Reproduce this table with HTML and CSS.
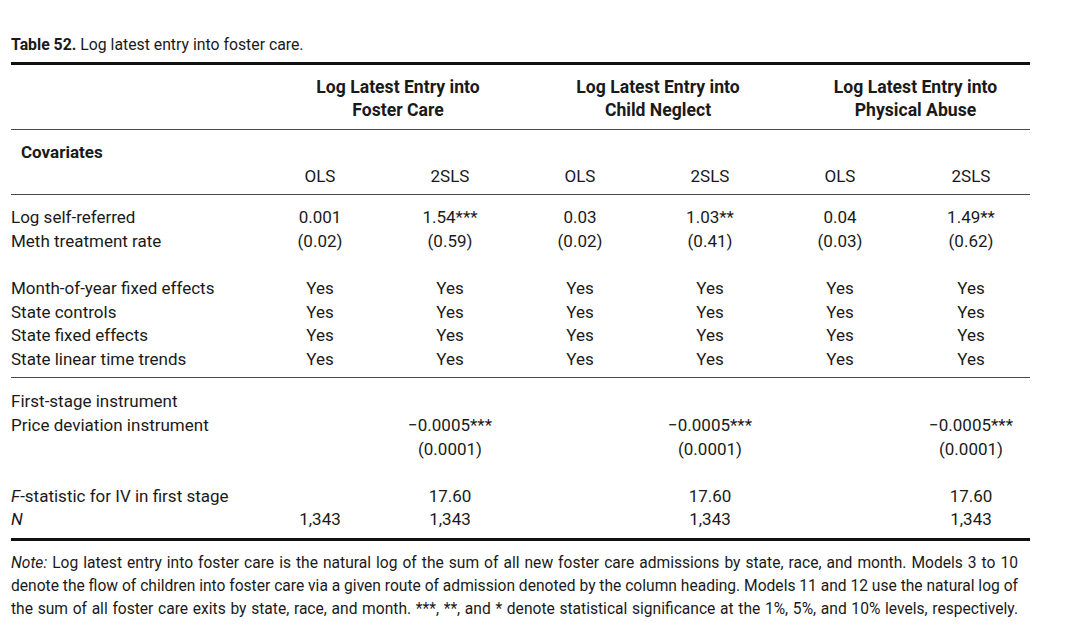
FILE: index.html
```html
<!DOCTYPE html>
<html lang="en">
<head>
<meta charset="utf-8">
<title>Table 52</title>
<link rel="stylesheet" href="styles.css">
</head>
<body>
<div class="page">
  <p class="caption"><b>Table 52.</b> Log latest entry into foster care.</p>
  <table class="tbl">
    <colgroup>
      <col class="c-label">
      <col class="c-num"><col class="c-num"><col class="c-num"><col class="c-num"><col class="c-num"><col class="c-last">
    </colgroup>
    <thead>
      <tr class="grp first last">
        <th></th>
        <th colspan="2" class="gh">Log Latest Entry into<br>Foster Care</th>
        <th colspan="2" class="gh">Log Latest Entry into<br>Child Neglect</th>
        <th colspan="2" class="gh">Log Latest Entry into<br>Physical Abuse</th>
      </tr>
      <tr class="first">
        <th class="lbl cov">Covariates</th>
        <td></td><td></td><td></td><td></td><td></td><td></td>
      </tr>
      <tr class="last">
        <td></td>
        <td>OLS</td><td>2SLS</td><td>OLS</td><td>2SLS</td><td>OLS</td><td>2SLS</td>
      </tr>
    </thead>
    <tbody>
      <tr class="first">
        <td class="lbl">Log self-referred</td>
        <td>0.001</td><td>1.54***</td><td>0.03</td><td>1.03**</td><td>0.04</td><td>1.49**</td>
      </tr>
      <tr>
        <td class="lbl">Meth treatment rate</td>
        <td>(0.02)</td><td>(0.59)</td><td>(0.02)</td><td>(0.41)</td><td>(0.03)</td><td>(0.62)</td>
      </tr>
      <tr class="blank"><td colspan="7"></td></tr>
      <tr>
        <td class="lbl">Month-of-year fixed effects</td>
        <td>Yes</td><td>Yes</td><td>Yes</td><td>Yes</td><td>Yes</td><td>Yes</td>
      </tr>
      <tr>
        <td class="lbl">State controls</td>
        <td>Yes</td><td>Yes</td><td>Yes</td><td>Yes</td><td>Yes</td><td>Yes</td>
      </tr>
      <tr>
        <td class="lbl">State fixed effects</td>
        <td>Yes</td><td>Yes</td><td>Yes</td><td>Yes</td><td>Yes</td><td>Yes</td>
      </tr>
      <tr class="last">
        <td class="lbl">State linear time trends</td>
        <td>Yes</td><td>Yes</td><td>Yes</td><td>Yes</td><td>Yes</td><td>Yes</td>
      </tr>
    </tbody>
    <tbody class="second">
      <tr class="first">
        <td class="lbl">First-stage instrument</td>
        <td></td><td></td><td></td><td></td><td></td><td></td>
      </tr>
      <tr>
        <td class="lbl">Price deviation instrument</td>
        <td></td><td>−0.0005***</td><td></td><td>−0.0005***</td><td></td><td>−0.0005***</td>
      </tr>
      <tr>
        <td class="lbl"></td>
        <td></td><td>(0.0001)</td><td></td><td>(0.0001)</td><td></td><td>(0.0001)</td>
      </tr>
      <tr class="blank"><td colspan="7"></td></tr>
      <tr>
        <td class="lbl"><i>F</i>-statistic for IV in first stage</td>
        <td></td><td>17.60</td><td></td><td>17.60</td><td></td><td>17.60</td>
      </tr>
      <tr class="last">
        <td class="lbl"><i>N</i></td>
        <td>1,343</td><td>1,343</td><td></td><td>1,343</td><td></td><td>1,343</td>
      </tr>
    </tbody>
  </table>
  <p class="note"><i>Note:</i> Log latest entry into foster care is the natural log of the sum of all new foster care admissions by state, race, and month. Models 3 to 10<br>denote the flow of children into foster care via a given route of admission denoted by the column heading. Models 11 and 12 use the natural log of<br>the sum of all foster care exits by state, race, and month. ***, **, and * denote statistical significance at the 1%, 5%, and 10% levels, respectively.</p>
</div>
</body>
</html>
```

FILE: styles.css
```css
html, body {
  margin: 0;
  padding: 0;
  background: #ffffff;
}
body {
  font-family: Roboto, "Noto Sans", "Liberation Sans", sans-serif;
  color: #1a1a1a;
}
.page {
  padding: 36px 0 0 11px;
  width: 1019px;
}
.caption {
  margin: 0;
  font-size: 15.8px;
  line-height: 18px;
}
.caption b {
  font-weight: 700;
}
.tbl {
  margin-top: 8px;
  width: 1019px;
  border-collapse: collapse;
  table-layout: fixed;
  border-top: 3px solid #111;
  border-bottom: 3px solid #111;
  font-size: 17px;
}
.c-label { width: 244px; }
.c-num { width: 130px; }
.c-last { width: 125px; }
.tbl th, .tbl td {
  padding: 0;
  height: 23.6px;
  line-height: 23.6px;
  text-align: center;
  font-weight: 400;
  white-space: nowrap;
}
.tbl td:last-child, .tbl th:last-child {
  padding-left: 7px;
}
.tbl .lbl {
  text-align: left;
}
.tbl .cov {
  font-weight: 700;
  padding-left: 10px;
}
.tbl .gh {
  font-weight: 700;
  font-size: 17.6px;
  padding-left: 26px;
  line-height: 23px;
}
.tbl td.gh:last-child, .tbl th.gh:last-child {
  padding-left: 26px;
}
.tbl tr.first > * {
  padding-top: 11px;
}
.tbl tbody.second tr.first > * {
  padding-top: 12px;
}
.tbl tr.last > * {
  padding-bottom: 6px;
  border-bottom: 1px solid #4a4a4a;
}
.tbl tbody.second tr.last > * {
  border-bottom: none;
}
.tbl tr.grp.first > * {
  padding-top: 11px;
  padding-bottom: 7px;
}
.note {
  margin: 11px 0 0;
  font-size: 15.6px;
  line-height: 23.2px;
  word-spacing: -0.4px;
  text-align: justify;
  text-align-last: justify;
  width: 1007px;
}
```
